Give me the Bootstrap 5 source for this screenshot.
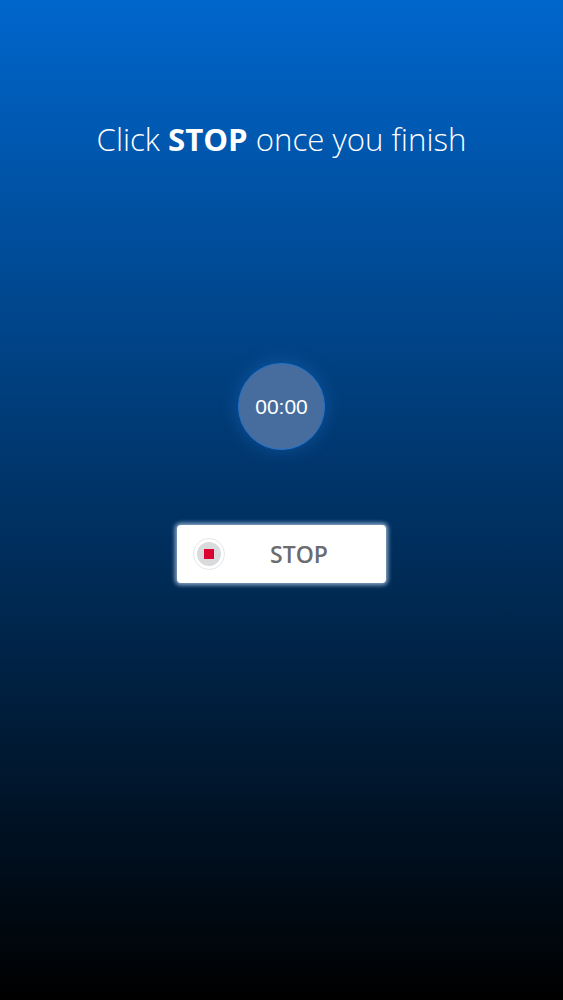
<!DOCTYPE html>
<html lang="en">
<head>
<meta charset="utf-8">
<meta name="viewport" content="width=device-width, initial-scale=1">
<link rel="stylesheet" href="https://cdn.jsdelivr.net/npm/bootstrap@5.3.0/dist/css/bootstrap.min.css">
<style>
html, body { height: 100%; }
body { background: linear-gradient(to bottom, #0066cc 0%, #000000 100%); background-repeat: no-repeat; font-family: "Open Sans", sans-serif; }
.stage { height: 1000px; padding-top: 118px; }
.headline { font-size: 31.2px; font-weight: 300; line-height: 42px; color: #fff; margin: 0 0 203px; }
.headline strong { font-weight: 700; }
.timer-disc { width: 87px; height: 87px; background: #466d9e; border: 1px solid #2673cc; box-shadow: 0 0 18px rgba(40,120,210,.4); color: #fff; font-family: "Liberation Sans", sans-serif; font-size: 21px; margin-bottom: 75px; }
.stop-btn { width: 209px; height: 58px; background: #fff; border: 0; border-radius: 4px; box-shadow: 0 0 4px 1.5px rgba(190,215,240,.75); padding: 0 0 0 16px; color: #6a6c70; font-size: 23px; font-weight: 600; }
.stop-ring { width: 32px; height: 32px; border: 1px solid #e6e7e9; padding: 3px; flex: none; background: #fff; }
.stop-core { width: 100%; height: 100%; background: #d9dadc; }
.stop-square { width: 10px; height: 10px; background: #dc0032; }
.stop-label { margin-left: 45px; }
</style>
</head>
<body>
<main class="stage d-flex flex-column align-items-center">
  <h1 class="headline text-center">Click <strong>STOP</strong> once you finish</h1>
  <div class="timer-disc rounded-circle d-flex align-items-center justify-content-center">00:00</div>
  <button type="button" class="stop-btn d-flex align-items-center">
    <span class="stop-ring rounded-circle d-flex">
      <span class="stop-core rounded-circle d-flex align-items-center justify-content-center"><span class="stop-square"></span></span>
    </span>
    <span class="stop-label text-center">STOP</span>
  </button>
</main>
<script src="https://cdn.jsdelivr.net/npm/bootstrap@5.3.0/dist/js/bootstrap.bundle.min.js"></script>
</body>
</html>
